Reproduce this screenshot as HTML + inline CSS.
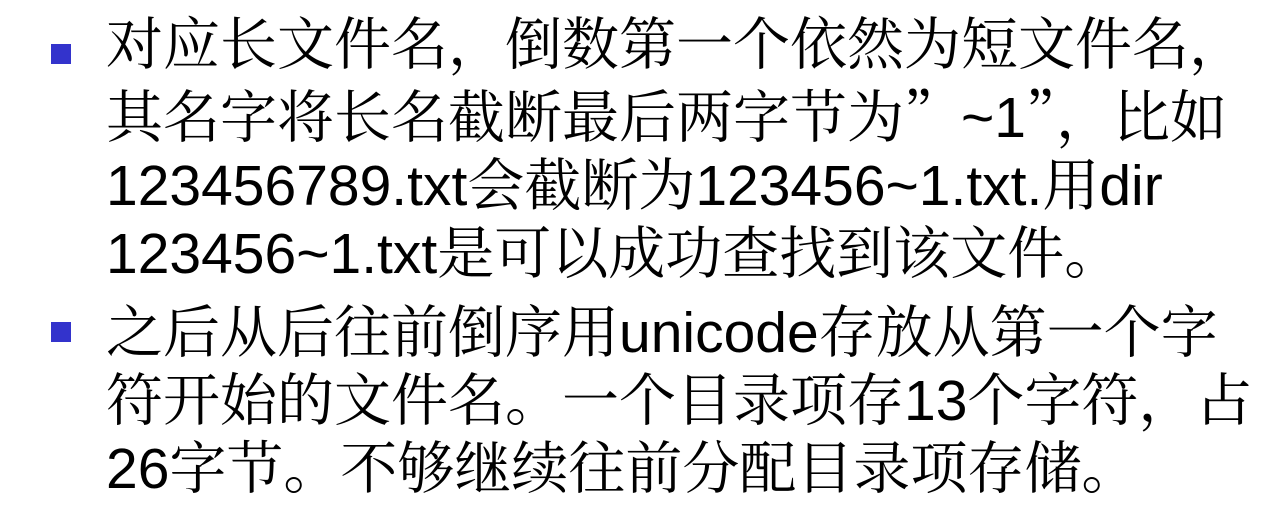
<!DOCTYPE html>
<html><head><meta charset="utf-8"><style>
html,body{margin:0;padding:0;background:#fff;width:1287px;height:522px;overflow:hidden}
.p{position:absolute;left:106px;font-family:"Liberation Sans","Noto Serif CJK SC","Noto Sans CJK SC",serif;font-size:57px;line-height:68px;color:#000;white-space:nowrap}
.q{font-family:"Noto Serif CJK SC","Noto Sans CJK SC",serif;display:inline-block;width:57px}
.b{position:absolute;left:51px;width:20px;height:20px;background:#3333CC}
</style></head><body>
<div class="b" style="top:44px"></div>
<div class="p" style="top:11px">对应长文件名，倒数第一个依然为短文件名，<br>其名字将长名截断最后两字节为<span class="q" style="text-align:right">”</span>~1<span class="q" style="width:30px">”</span>，比如<br>123456789.txt会截断为123456~1.txt.用dir<br>123456~1.txt是可以成功查找到该文件。</div>
<div class="b" style="top:322px"></div>
<div class="p" style="top:299px">之后从后往前倒序用unicode存放从第一个字<br>符开始的文件名。一个目录项存13个字符，占<br>26字节。不够继续往前分配目录项存储。</div>
</body></html>
